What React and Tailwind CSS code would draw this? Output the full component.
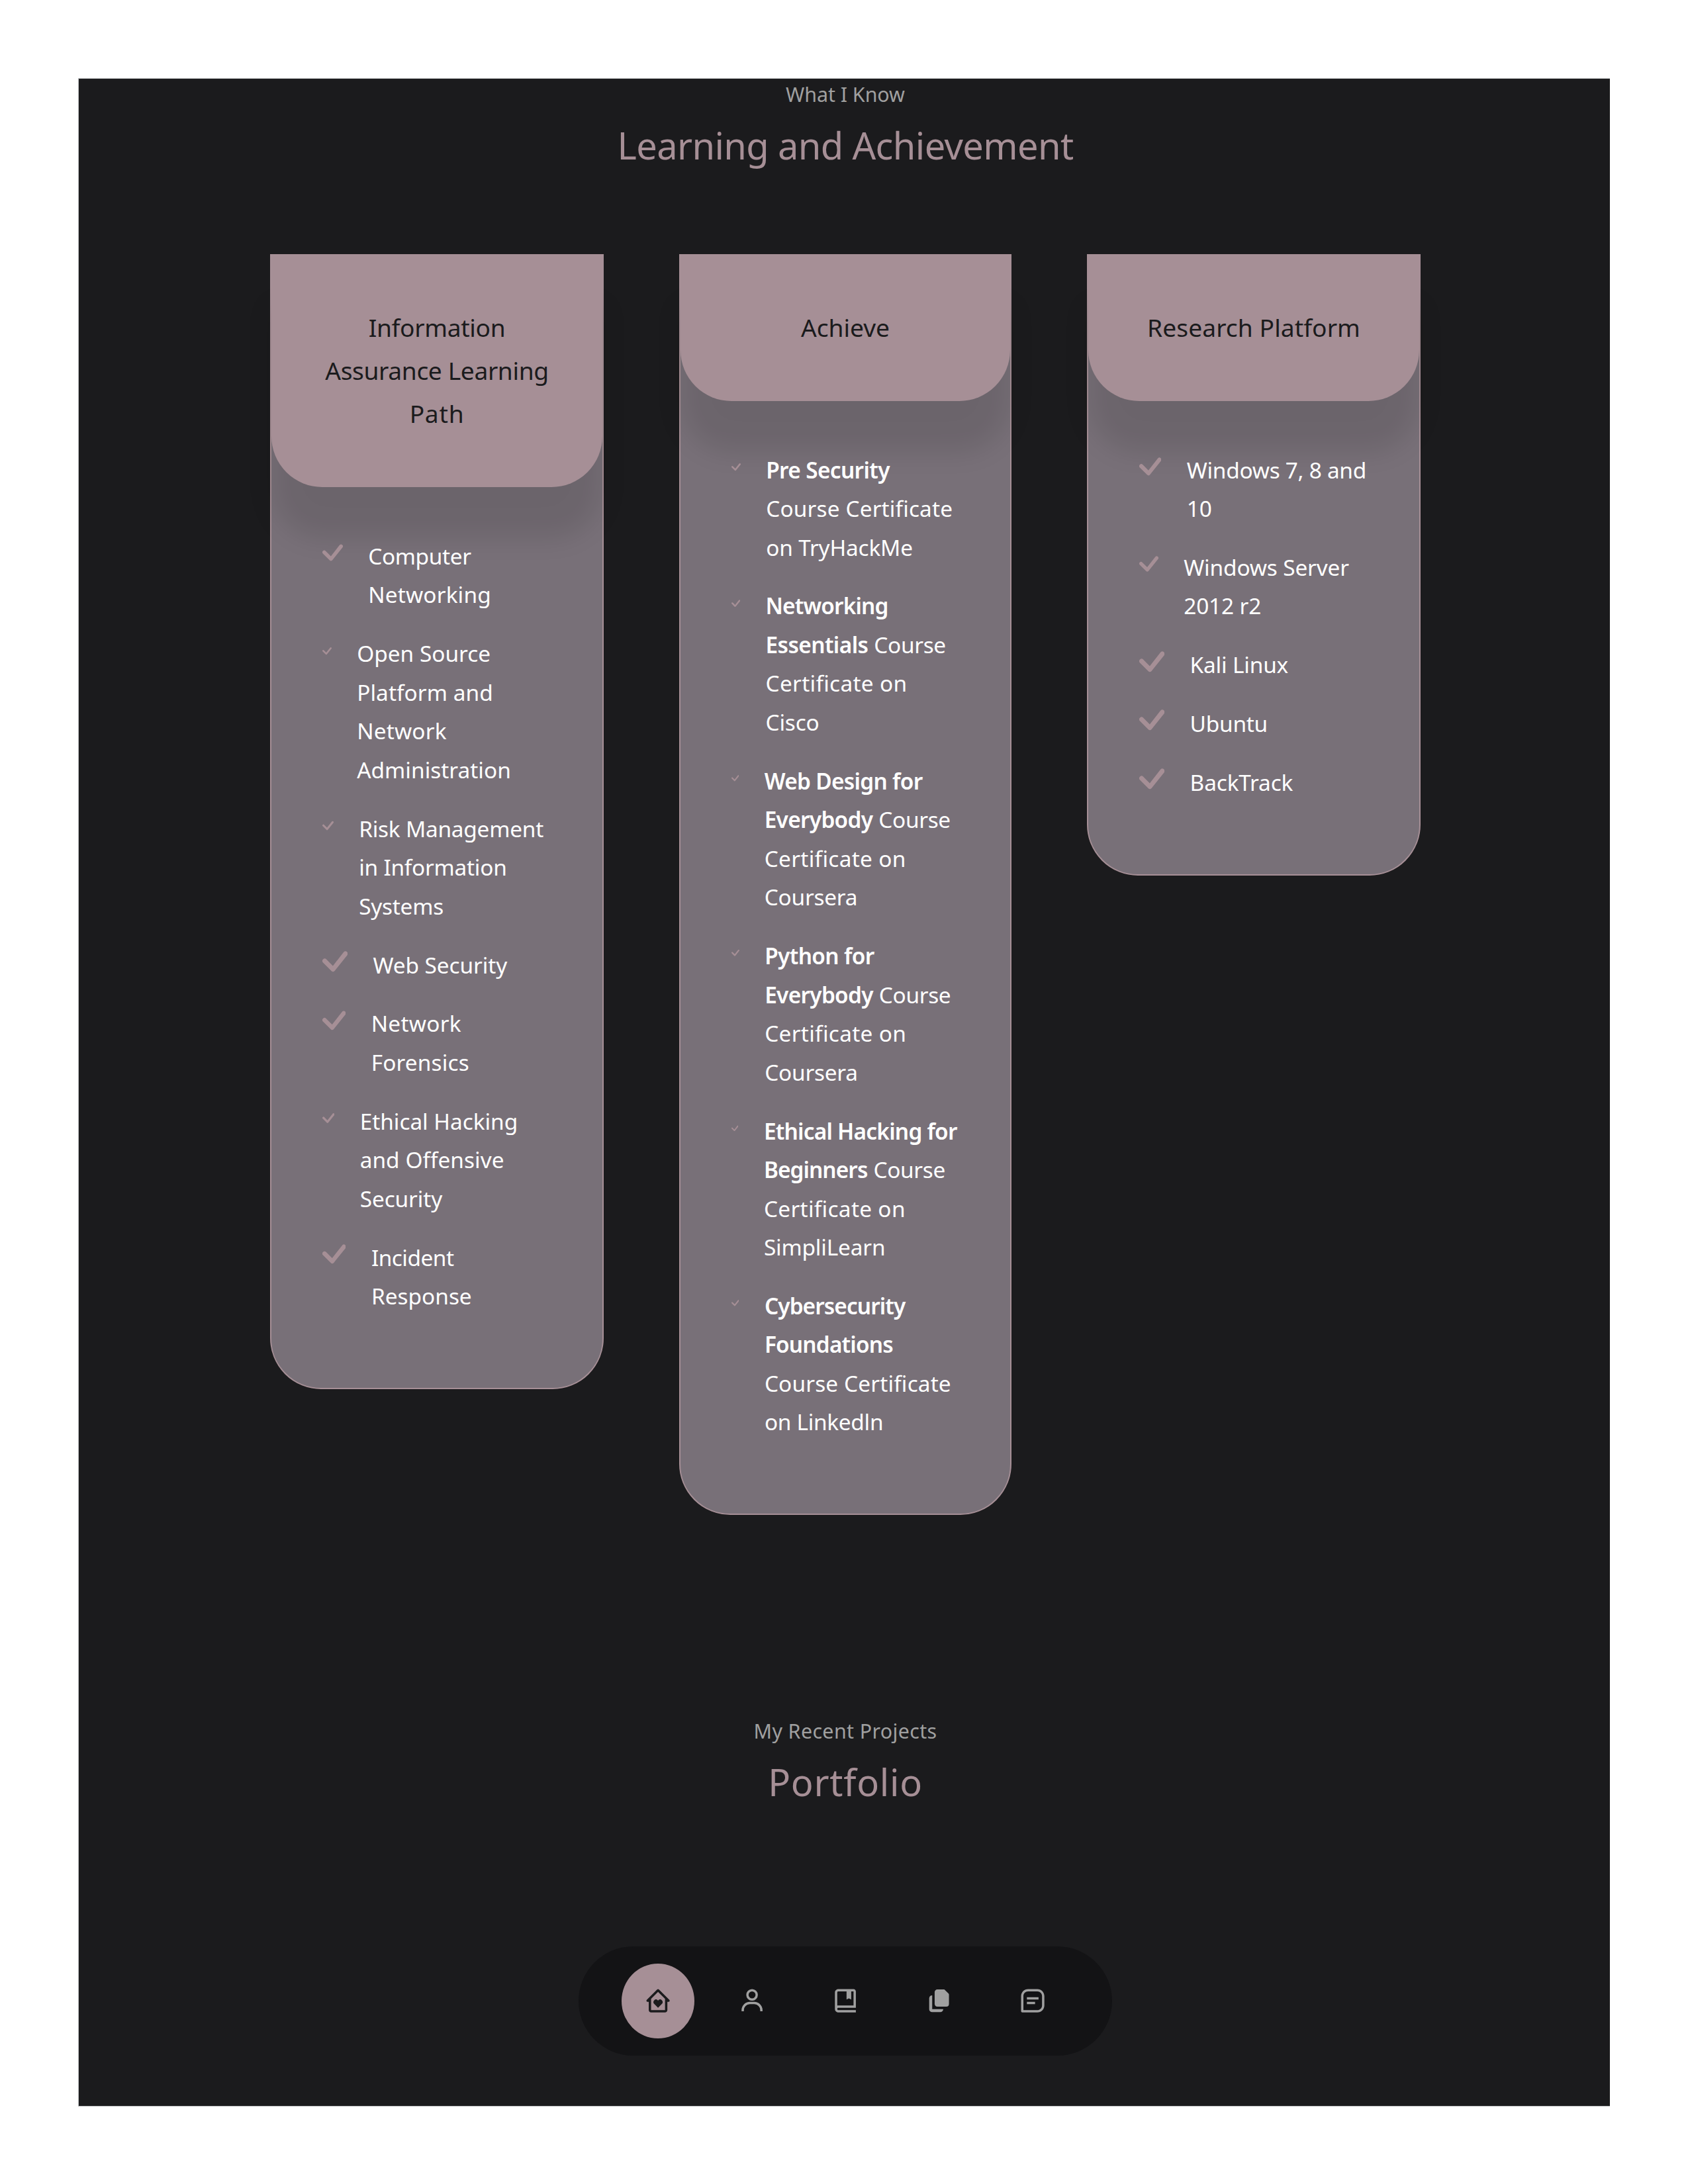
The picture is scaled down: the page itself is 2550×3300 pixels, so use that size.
import { useLayoutEffect, useRef, useState } from "react";
import { BiHomeHeart, BiUser, BiBookBookmark, BiMessageSquareDetail } from "react-icons/bi";

// Text run whose tracking is adjusted so that it spans `w` pixels.
function Run({ w, className = "", children }) {
  const ref = useRef(null);
  const [tracking, setTracking] = useState(0);
  useLayoutEffect(() => {
    const el = ref.current;
    const cs = getComputedStyle(el);
    const ctx = document.createElement("canvas").getContext("2d");
    ctx.font = `${cs.fontWeight} ${cs.fontSize} ${cs.fontFamily}`;
    const m = ctx.measureText(children);
    const ink = m.actualBoundingBoxRight + m.actualBoundingBoxLeft;
    setTracking((w - ink) / (children.length - 1));
  }, [w, children]);
  return (
    <span ref={ref} className={className} style={{ letterSpacing: `${tracking}px` }}>
      {children}
    </span>
  );
}

function CheckIcon({ size }) {
  return (
    <svg viewBox="0 0 16 16" className="mt-[6.3px] h-[38.4px] shrink-0 fill-[#a68f96]" style={{ width: size }}>
      <path d="M13.485 1.431a1.473 1.473 0 0 1 2.104 2.062l-7.84 9.801a1.473 1.473 0 0 1-2.12.04L.431 8.138a1.473 1.473 0 0 1 2.084-2.083l4.111 4.112 6.82-8.69a.486.486 0 0 1 .04-.045z" />
    </svg>
  );
}

function CopyIcon({ className }) {
  return (
    <svg viewBox="0 0 24 24" fill="currentColor" className={className}>
      <path d="M10.900 2.300h5.400c.5 0 .8.1 1.100.5l2.900 2.900c.4.4.5.7.5 1.200v7.900a2.300 2.300 0 0 1-2.300 2.300h-7.600a2.300 2.300 0 0 1-2.400-2.300V4.600a2.300 2.300 0 0 1 2.400-2.300z" />
      <path d="M6.400 7.400A2.700 2.700 0 0 0 3.800 10v9.300a2.500 2.500 0 0 0 2.500 2.500h7a2.600 2.600 0 0 0 2.600-2.600H6.400z" />
    </svg>
  );
}

// Each line is a list of runs: [text, width, isBold].
const cards = [
  {
    title: [["Information", 203], ["Assurance Learning", 335], ["Path", 76]],
    items: [
      { icon: 31, lines: [[["Computer", 154]], [["Networking", 180]]] },
      { icon: 14, lines: [[["Open Source", 199]], [["Platform and", 200]], [["Network", 132.5]], [["Administration", 230]]] },
      { icon: 17, lines: [[["Risk Management", 276]], [["in Information", 219]], [["Systems", 126]]] },
      { icon: 38.4, lines: [[["Web Security", 203.6]]] },
      { icon: 35.5, lines: [[["Network", 133]], [["Forensics", 144]]] },
      { icon: 18.5, lines: [[["Ethical Hacking", 233]], [["and Offensive", 216]], [["Security", 124.6]]] },
      { icon: 35.7, lines: [[["Incident", 124]], [["Response", 148]]] },
    ],
  },
  {
    title: [["Achieve", 133]],
    items: [
      { icon: 14, lines: [[["Pre Security", 186, true]], [["Course Certificate", 279]], [["on TryHackMe", 220]]] },
      { icon: 13.3, lines: [[["Networking", 181, true]], [["Essentials", 152, true], ["Course", 106]], [["Certificate on", 209]], [["Cisco", 78]]] },
      { icon: 11.5, lines: [[["Web Design for", 240, true]], [["Everybody", 162, true], ["Course", 106]], [["Certificate on", 209]], [["Coursera", 137]]] },
      { icon: 12, lines: [[["Python for", 164.5, true]], [["Everybody", 162, true], ["Course", 106]], [["Certificate on", 209]], [["Coursera", 137]]] },
      { icon: 10.7, lines: [[["Ethical Hacking for", 290, true]], [["Beginners", 155, true], ["Course", 106]], [["Certificate on", 209]], [["SimpliLearn", 180]]] },
      { icon: 11.7, lines: [[["Cybersecurity", 213, true]], [["Foundations", 191.4, true]], [["Course Certificate", 279]], [["on Linkedln", 176]]] },
    ],
  },
  {
    title: [["Research Platform", 316]],
    items: [
      { icon: 33.5, lines: [[["Windows 7, 8 and", 269]], [["10", 35]]] },
      { icon: 29, lines: [[["Windows Server", 250]], [["2012 r2", 115]]] },
      { icon: 38.4, lines: [[["Kali Linux", 146]]] },
      { icon: 38.4, lines: [[["Ubuntu", 112]]] },
      { icon: 38.4, lines: [[["BackTrack", 153]]] },
    ],
  },
];

function Card({ title, items }) {
  return (
    <article className="rounded-b-[77px] border-2 border-[#a68f96] bg-[#787078] pb-[109px]">
      <h3 className="rounded-b-[77px] bg-[#a68f96] pt-[75.5px] pb-[79px] text-center text-[37.2px] leading-[65.2px] text-[#1b1b1d] shadow-[0_77px_38px_rgba(0,0,0,0.1)]">
        {title.map(([text, w]) => (
          <span key={text} className="block whitespace-nowrap">
            <Run w={w}>{text}</Run>
          </span>
        ))}
      </h3>
      <ul className="relative flex flex-col gap-[30.4px] pt-[74.8px] pl-[76.8px]">
        {items.map(({ icon, lines }, i) => (
          <li key={i} className="flex items-start gap-[38.4px]">
            <CheckIcon size={icon} />
            <p className="text-[33.4px] leading-[58.5px] text-white">
              {lines.map((runs, j) => (
                <span key={j} className="flex gap-[9px] whitespace-nowrap">
                  {runs.map(([text, w, bold]) => (
                    <Run key={text} w={w} className={bold ? "font-semibold" : ""}>
                      {text}
                    </Run>
                  ))}
                </span>
              ))}
            </p>
          </li>
        ))}
      </ul>
    </article>
  );
}

function Heading({ small, smallWidth, large, largeWidth, className = "" }) {
  return (
    <header className={`pl-[3px] text-center ${className}`}>
      <h5 className="text-[30.4px] leading-[48px] text-[#a0a0a0]">
        <Run w={smallWidth}>{small}</Run>
      </h5>
      <h2 className="mt-1 text-[56px] leading-[96px] text-[#a68f96]">
        <Run w={largeWidth}>{large}</Run>
      </h2>
    </header>
  );
}

export default function App() {
  const icons = [BiHomeHeart, BiUser, BiBookBookmark, CopyIcon, BiMessageSquareDetail];
  return (
    <div className="h-[3300px] w-[2550px] bg-white pt-[118px] pl-[118px] font-['Noto_Sans',sans-serif]">
      <main className="h-[3065px] w-[2314px] border-t border-l border-b border-[#bfc1c2] bg-[#1b1b1d]">
        <Heading small="What I Know" smallWidth={180} large="Learning and Achievement" largeWidth={683.5} />
        <section className="mt-[117px] ml-[289px] grid h-[1903.5px] grid-cols-[504px_502px_504px] items-start gap-[114px]">
          {cards.map((card, i) => (
            <Card key={i} {...card} />
          ))}
        </section>
        <Heading small="My Recent Projects" smallWidth={274} large="Portfolio" largeWidth={225} className="mt-[304.5px]" />
        <nav className="mt-[201px] ml-[755px] flex h-[165px] w-[806px] items-center justify-center gap-[31px] rounded-full bg-[#131315]">
          {icons.map((Icon, i) => (
            <a
              key={i}
              className={
                i === 0
                  ? "flex h-[113px] w-[110.4px] items-center justify-center rounded-[50%] bg-[#a68f96] text-[#1b1b1d]"
                  : "flex h-[113px] w-[110.4px] items-center justify-center rounded-[50%] text-[#a0a0a0]"
              }
            >
              <Icon className="h-[42.2px] w-[42.2px]" />
            </a>
          ))}
        </nav>
      </main>
    </div>
  );
}
